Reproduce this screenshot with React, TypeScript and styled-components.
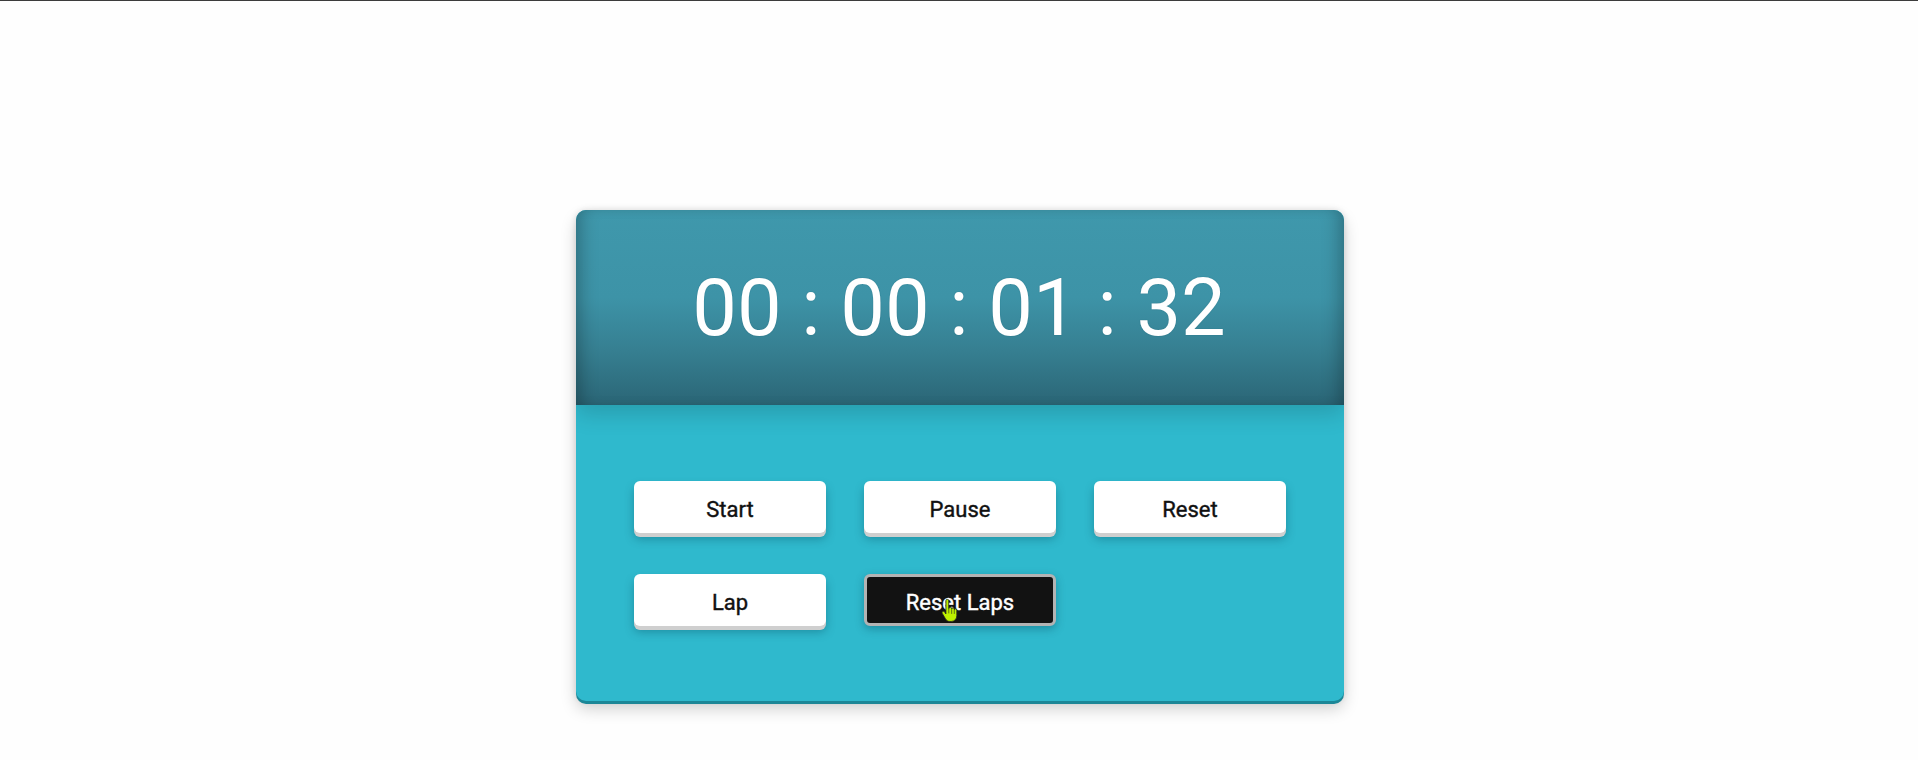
import React from "react";
import styled, { createGlobalStyle } from "styled-components";

const GlobalStyle = createGlobalStyle`
  html, body { margin: 0; padding: 0; }
  body {
    background: #fefefe;
    border-top: 1px solid #3c3c3c;
    font-family: Roboto, "Liberation Sans", sans-serif;
  }
`;

const Page = styled.div`
  display: flex;
  justify-content: center;
  align-items: flex-start;
  padding-top: 209px;
  padding-left: 2px;
  min-height: 540px;
`;

const Card = styled.div`
  width: 768px;
  border-radius: 10px;
  overflow: hidden;
  background: #2fb9cd;
  box-shadow: 0 3px 0 #1c8797, 0 8px 16px rgba(0, 0, 0, 0.18), 0 0 6px rgba(0, 0, 0, 0.12);
  display: flex;
  flex-direction: column;
`;

const Display = styled.div`
  position: relative;
  z-index: 1;
  height: 195px;
  display: flex;
  align-items: center;
  justify-content: center;
  background: linear-gradient(180deg, #3f98ac 0%, #3d93a7 45%, #367f91 72%, #2b6676 100%);
  box-shadow: inset 14px 0 18px -10px rgba(0, 0, 0, 0.28), inset -14px 0 18px -10px rgba(0, 0, 0, 0.28),
    0 8px 22px rgba(0, 0, 0, 0.16);
`;

const Time = styled.div`
  color: #ffffff;
  font-family: Roboto, "Liberation Sans", sans-serif;
  font-size: 79.5px;
  font-weight: 400;
  line-height: 1;
  text-shadow: 0 0 1px rgba(10, 80, 100, 0.6);
  white-space: pre;
  transform: translateX(-1px);
`;

const Controls = styled.div`
  display: grid;
  grid-template-columns: repeat(3, 192px);
  column-gap: 38px;
  row-gap: 41px;
  justify-content: center;
  padding: 76px 58px 75px;
`;

const Button = styled.button<{ $dark?: boolean }>`
  position: relative;
  height: 52px;
  border-radius: 6px;
  font-family: Roboto, "Liberation Sans", sans-serif;
  font-size: 22px;
  font-weight: 400;
  -webkit-text-stroke: 0.4px currentColor;
  cursor: pointer;
  padding: 0;
  padding-top: 4px;
  border: ${(p) => (p.$dark ? "3px solid #b3b3b3" : "none")};
  background: ${(p) => (p.$dark ? "#121212" : "#ffffff")};
  color: ${(p) => (p.$dark ? "#ffffff" : "#111111")};
  box-shadow: ${(p) =>
    p.$dark
      ? "0 3px 8px rgba(0, 60, 80, 0.35)"
      : "0 4px 0 #cfcfcf, 0 6px 10px rgba(0, 60, 80, 0.35)"};
`;

const Cursor = styled.svg`
  position: absolute;
  left: 74px;
  top: 22px;
  width: 17px;
  height: 24px;
  pointer-events: none;
`;

const HandCursor = () => (
  <Cursor viewBox="0 0 14 20">
    <path
      d="M4 1.5c0-.8.5-1.3 1.2-1.3S6.4.7 6.4 1.5V8l.2-.1c0-.7.5-1.1 1.1-1.1s1.1.4 1.1 1.1v.4c.1-.6.6-1 1.1-1s1.1.4 1.1 1.1v.6c.2-.5.6-.8 1.1-.8.6 0 1 .5 1 1.1v4.6c0 2.6-1.8 4.8-4.6 4.8H7.2c-1.6 0-2.7-.8-3.5-2.1L1 12.1c-.4-.7-.2-1.4.4-1.7.6-.3 1.2-.1 1.6.5L4 12.4V1.5z"
      fill="#bdf000"
      stroke="#222"
      strokeWidth="0.7"
    />
    <path d="M6.4 8v4M8.8 8.4v4M11 9v3.4" stroke="#222" strokeWidth="0.5" fill="none" />
  </Cursor>
);

export default function App() {
  return (
    <>
      <GlobalStyle />
      <Page>
        <Card>
          <Display>
            <Time>00 : 00 : 01 : 32</Time>
          </Display>
          <Controls>
            <Button>Start</Button>
            <Button>Pause</Button>
            <Button>Reset</Button>
            <Button>Lap</Button>
            <Button $dark>
              Reset Laps
              <HandCursor />
            </Button>
          </Controls>
        </Card>
      </Page>
    </>
  );
}
